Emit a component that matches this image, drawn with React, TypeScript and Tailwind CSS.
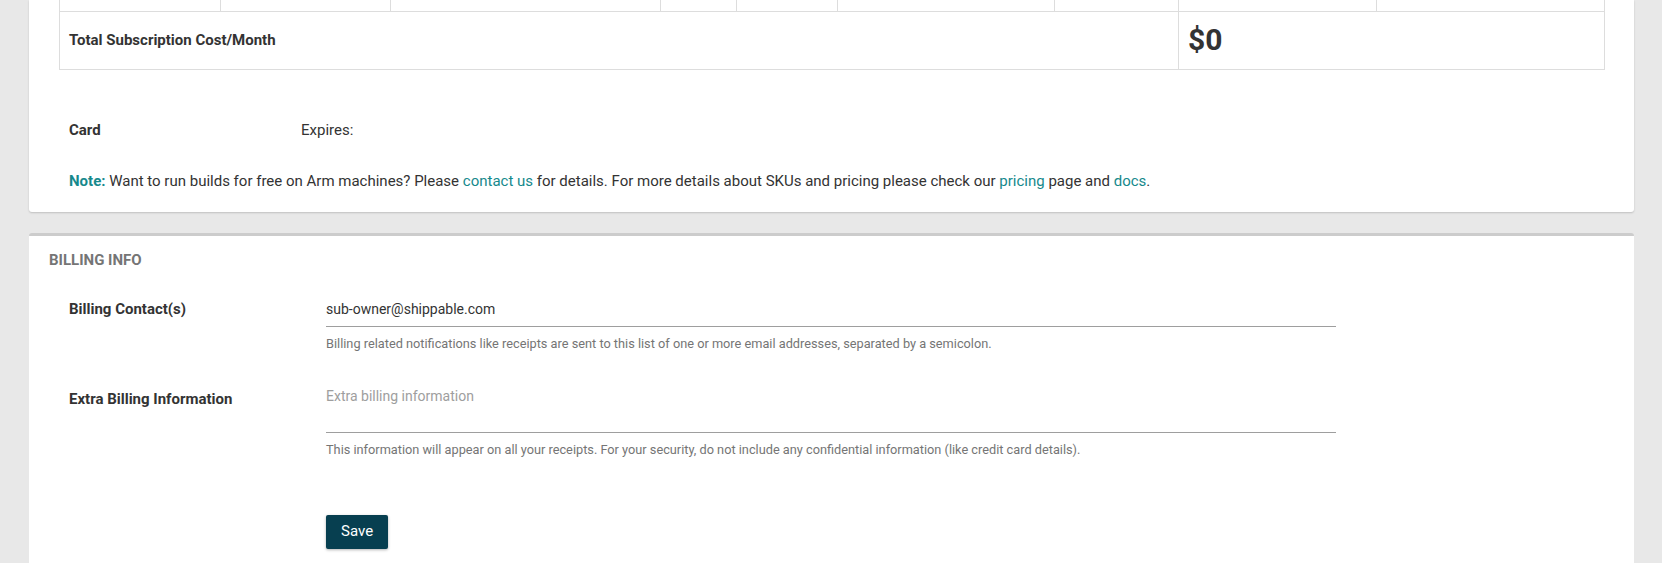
const COLS = [161, 170, 270, 76, 101, 217, 124, 198, 228];

const LINK = "text-[#16898c]";

const SubscriptionSummary = () => {
  return (
    <div className="rounded-b-[3px] bg-white px-[30px] pb-[21px] shadow-[0_1px_2px_rgba(0,0,0,0.18)]">
      <table className="w-full table-fixed border-collapse">
        <colgroup>
          {COLS.map((w, i) => (
            <col key={i} style={{ width: w }} />
          ))}
        </colgroup>
        <tbody>
          {/* row scrolled mostly off the top */}
          <tr className="h-[11px]">
            {COLS.map((_, i) => (
              <td key={i} className="border border-t-0 border-[#dddddd] p-0" />
            ))}
          </tr>
          <tr className="h-[58px]">
            <td colSpan={7} className="border border-[#dddddd] px-[9px] font-bold text-[#333]">
              Total Subscription Cost/Month
            </td>
            <td colSpan={2} className="border border-[#dddddd] px-[9px] text-[30px] leading-none font-bold text-[#333]">
              $0
            </td>
          </tr>
        </tbody>
      </table>

      {/* Card */}
      <div className="mt-[50px] flex px-[10px] leading-[20px]">
        <div className="w-[232px] font-bold">Card</div>
        <div>Expires:</div>
      </div>

      {/* Note */}
      <p className="mt-[31px] px-[10px] leading-[20px]">
        <span className={`font-bold ${LINK}`}>Note:</span> Want to run builds for free on Arm machines? Please{" "}
        <a className={LINK}>contact us</a> for details. For more details about SKUs and pricing please check our{" "}
        <a className={LINK}>pricing</a> page and <a className={LINK}>docs</a>.
      </p>
    </div>
  );
};

const BillingInfo = () => {
  return (
    <div className="mt-[21px] rounded-t-[3px] border-t-[3px] border-[#cccccc] bg-white px-[20px] pt-[14px] pb-[20px]">
      <div className="text-[15px] leading-[20px] font-bold text-[#757575]">BILLING INFO</div>

      <div className="mt-[22px] flex flex-col px-[20px]">
        {/* Billing contacts */}
        <div className="flex items-start">
          <div className="mt-[7px] w-[257px] shrink-0 leading-[20px] font-bold">Billing Contact(s)</div>
          <div className="w-[1010px]">
            <input
              className="h-[35px] w-full border-b border-[#9e9e9e] bg-transparent p-0 text-[14px] text-[#333] outline-none"
              defaultValue="sub-owner@shippable.com"
            />
            <div className="mt-[9px] text-[12.75px] leading-[16px] text-[#757575]">
              Billing related notifications like receipts are sent to this list of one or more email addresses, separated by a semicolon.
            </div>
          </div>
        </div>

        {/* Extra billing info */}
        <div className="mt-[29px] flex items-start">
          <div className="mt-[8px] w-[257px] shrink-0 leading-[20px] font-bold">Extra Billing Information</div>
          <div className="w-[1010px]">
            <textarea
              className="block h-[52px] w-full resize-none border-b border-[#9e9e9e] bg-transparent p-0 pt-[5px] text-[14px] leading-[20px] text-[#333] outline-none placeholder:text-[#9e9e9e]"
              placeholder="Extra billing information"
            />
            <div className="mt-[9px] text-[12.75px] leading-[16px] text-[#757575]">
              This information will appear on all your receipts. For your security, do not include any confidential information (like credit card details).
            </div>
          </div>
        </div>

        {/* Save */}
        <div className="mt-[57px] flex">
          <div className="w-[257px] shrink-0" />
          <button className="h-[34px] rounded-[2px] bg-[#073f50] px-[15px] text-[15px] text-white shadow-[0_1px_3px_rgba(0,0,0,0.3)]">
            Save
          </button>
        </div>
      </div>
    </div>
  );
};

export default function App() {
  return (
    <div className="min-h-screen overflow-hidden bg-[#e8e8e8] pr-[28px] pl-[29px] font-['Roboto','Liberation_Sans',sans-serif] text-[15px] text-[#333]">
      <SubscriptionSummary />
      <BillingInfo />
    </div>
  );
}
